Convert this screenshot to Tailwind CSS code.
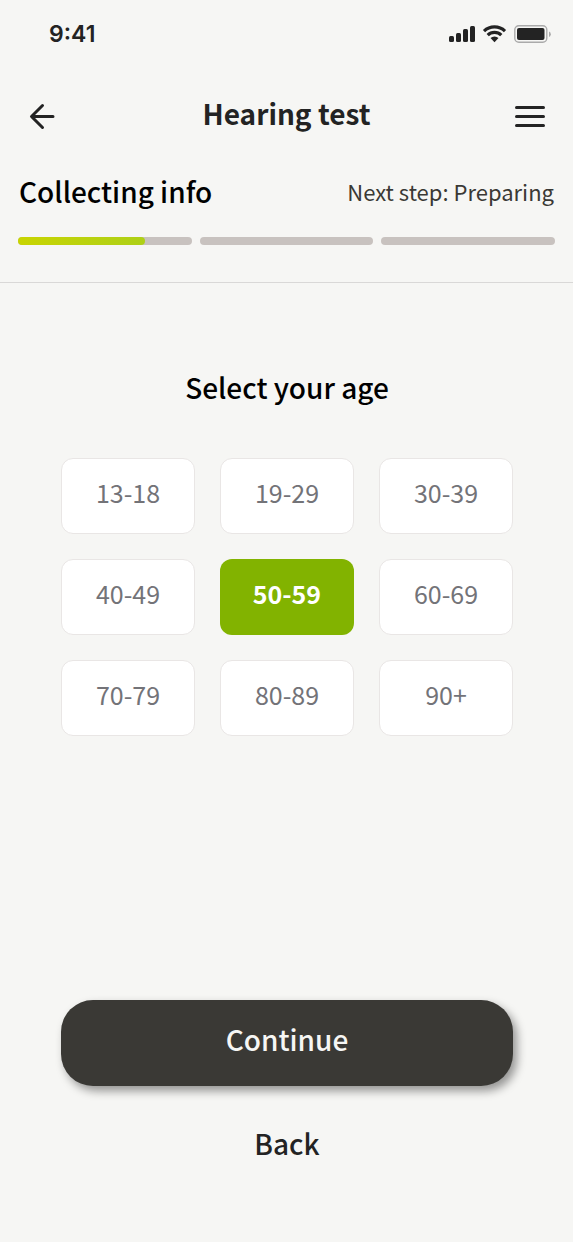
<!DOCTYPE html>
<html lang="en">
<head>
<meta charset="utf-8">
<meta name="viewport" content="width=device-width, initial-scale=1">
<title>Hearing test</title>
<script src="https://cdn.jsdelivr.net/npm/@tailwindcss/browser@4"></script>
</head>
<body class="flex min-h-screen flex-col bg-[#f6f6f4] font-['Noto_Sans_CJK_SC','Noto_Sans',sans-serif] text-[#232323]">
  <div class="flex h-17 items-center justify-between pr-[22px] pl-[49px]">
    <time class="font-['Inter',sans-serif] text-[23px] leading-8 font-semibold">9:41</time>
    <svg class="h-5 w-[103px]" viewBox="0 0 103 20" fill="#232323" aria-label="Signal, Wi-Fi and battery">
      <rect x="1" y="12" width="5" height="6" rx="1.5"/>
      <rect x="8" y="9" width="5" height="9" rx="1.5"/>
      <rect x="15" y="5" width="5" height="13" rx="1.5"/>
      <rect x="22" y="2" width="5" height="16" rx="1.5"/>
      <path d="M46.500 18.200l4-4.100a5.800 5.800 0 0 0-8 0z"/>
      <path d="M39.700 11.200a9.800 9.800 0 0 1 13.600 0" fill="none" stroke="#232323" stroke-width="3.200"/>
      <path d="M36 7.100a15.200 15.200 0 0 1 21 0" fill="none" stroke="#232323" stroke-width="3.200"/>
      <rect x="66.800" y="1.700" width="32" height="16.600" rx="4" fill="none" stroke="#aaaaaa" stroke-width="1.400"/>
      <rect x="69" y="4" width="27.500" height="12" rx="2"/>
      <path d="M101 7.500v5.500q1.800-.8 1.800-2.750t-1.800-2.750z" fill="#aaaaaa"/>
    </svg>
  </div>

  <header class="grid grid-cols-[1fr_auto_1fr] items-center px-7 pt-7">
    <button type="button" aria-label="Go back" class="justify-self-start">
      <svg class="size-7" viewBox="0 0 28 28" fill="none" stroke="#232323" stroke-width="3" stroke-linecap="round" stroke-linejoin="round"><path d="M25 14.500H4M14.500 3.500L3.500 14.500l11 11"/></svg>
    </button>
    <h1 class="pb-1.5 text-[28px] leading-[34px] font-bold">Hearing test</h1>
    <button type="button" aria-label="Menu" class="justify-self-end">
      <svg class="h-7 w-8" viewBox="0 0 32 28" fill="none" stroke="#232323" stroke-width="3" stroke-linecap="round"><path d="M3.500 5.500h27M3.500 14.500h27M3.500 23.500h27"/></svg>
    </button>
  </header>

  <section class="border-b border-[#d9d8d7] px-[18px] pt-[35px] pb-[37px]">
    <div class="flex items-center justify-between px-px">
      <h2 class="text-[28px] leading-10 font-medium text-black">Collecting info</h2>
      <p class="text-[22px] leading-10 text-[#3a3935]">Next step: Preparing</p>
    </div>
    <div class="mt-[26px] grid grid-cols-3 gap-2" role="progressbar" aria-label="Collecting info" aria-valuemin="0" aria-valuemax="100" aria-valuenow="24">
      <div class="h-2 rounded-full bg-[#c8c2bf]"><div class="h-2 rounded-full bg-linear-to-r from-[#c8d400] to-[#aed016]" style="width:73%"></div></div>
      <div class="h-2 rounded-full bg-[#c8c2bf]"></div>
      <div class="h-2 rounded-full bg-[#c8c2bf]"></div>
    </div>
  </section>

  <main class="flex flex-1 flex-col pr-[60px] pb-[79px] pl-[61px] pt-[84px]">
    <h2 class="text-center text-[28px] leading-10 font-medium text-black">Select your age</h2>
    <div class="mt-[51px] grid grid-cols-3 gap-[25px] text-[25px] leading-10 text-[#737378]">
      <button type="button" class="h-19 rounded-xl border border-[#e9e6e5] bg-white pb-2">13-18</button>
      <button type="button" class="h-19 rounded-xl border border-[#e9e6e5] bg-white pb-2">19-29</button>
      <button type="button" class="h-19 rounded-xl border border-[#e9e6e5] bg-white pb-2">30-39</button>
      <button type="button" class="h-19 rounded-xl border border-[#e9e6e5] bg-white pb-2">40-49</button>
      <button type="button" aria-pressed="true" class="h-19 rounded-xl bg-[#82b300] pb-2 font-bold text-white">50-59</button>
      <button type="button" class="h-19 rounded-xl border border-[#e9e6e5] bg-white pb-2">60-69</button>
      <button type="button" class="h-19 rounded-xl border border-[#e9e6e5] bg-white pb-2">70-79</button>
      <button type="button" class="h-19 rounded-xl border border-[#e9e6e5] bg-white pb-2">80-89</button>
      <button type="button" class="h-19 rounded-xl border border-[#e9e6e5] bg-white pb-2">90+</button>
    </div>
    <div class="mt-auto flex flex-col items-center gap-[37px]">
      <button type="button" class="h-[86px] w-full rounded-[32px] bg-[#3a3935] pb-2 text-[28px] leading-10 font-medium text-[#f6f6f4] shadow-[4px_5px_10px_rgba(0,0,0,0.4)]">Continue</button>
      <button type="button" class="text-[28px] leading-10 font-medium">Back</button>
    </div>
  </main>
</body>
</html>
